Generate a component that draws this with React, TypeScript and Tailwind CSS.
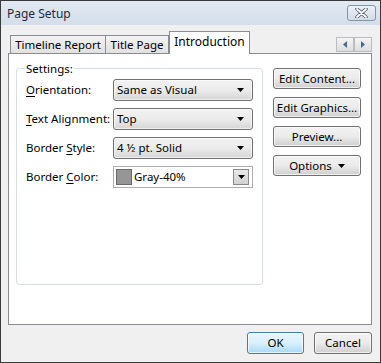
import type { ReactNode } from "react";

const font = { fontFamily: '"Noto Sans", "Open Sans", Arial, sans-serif' };

function Arrow({ className = "" }: { className?: string }) {
  return (
    <svg className={className} width="7" height="4" viewBox="0 0 7 4">
      <path d="M0 0H7L3.5 4Z" fill="#000" />
    </svg>
  );
}

function Key({ children }: { children: ReactNode }) {
  return <span className="underline underline-offset-[2px]">{children}</span>;
}

function Dropdown({ value }: { value: string }) {
  return (
    <div className="flex h-[22px] w-[140px] items-center justify-between rounded-[3px] border border-[#707070] bg-linear-to-b from-[#f2f2f2] via-[#ebebeb] to-[#d6d6d6] pl-[3px] pr-[8px] shadow-[inset_0_0_0_1px_rgba(255,255,255,0.6)]">
      <span className="leading-none">{value}</span>
      <Arrow />
    </div>
  );
}

function Row({ label, children }: { label: ReactNode; children: ReactNode }) {
  return (
    <div className="flex items-center">
      <div className="w-[87px] shrink-0 whitespace-nowrap">{label}</div>
      {children}
    </div>
  );
}

function WinButton({ children, primary = false, className = "" }: { children: ReactNode; primary?: boolean; className?: string }) {
  return (
    <button
      type="button"
      className={
        "flex items-center justify-center rounded-[3px] border leading-none shadow-[inset_0_0_0_1px_rgba(255,255,255,0.7)] " +
        (primary
          ? "border-[#3c7fb1] bg-linear-to-b from-[#eaf6fd] via-[#d9f0fc] to-[#a7d9f5] "
          : "border-[#707070] bg-linear-to-b from-[#f2f2f2] via-[#ebebeb] to-[#cfcfcf] ") +
        className
      }
    >
      {children}
    </button>
  );
}

function Tab({ label, active = false, className = "" }: { label: string; active?: boolean; className?: string }) {
  return (
    <div
      className={
        "flex items-center justify-center border-x border-t border-[#898c95] " +
        (active
          ? "relative z-10 -mb-[1px] h-[23px] bg-white pb-[3px] "
          : "h-[18px] bg-linear-to-b from-[#f3f3f3] to-[#e1e1e1] ") +
        className
      }
    >
      {label}
    </div>
  );
}

export default function App() {
  return (
    <div
      style={font}
      className="flex h-[363px] w-[381px] flex-col border border-[#3a3a3a] bg-[#f0f0f0] text-[11.5px] text-black"
    >
      {/* title bar */}
      <div className="flex h-[24px] items-start justify-between bg-linear-to-b from-[#e2e9f2] to-[#d3deea] pl-[6px] pr-[4px]">
        <span className="mt-[4px] text-[12px] text-[#1e2a3a]">Page Setup</span>
        <div className="mt-[4px] flex h-[16px] w-[29px] items-center justify-center rounded-[3px] border border-[#8494a8] bg-linear-to-b from-[#eef2f7] to-[#d3dbe6]">
          <svg width="13" height="10" viewBox="0 0 13 10">
            <path d="M2 1L11 9M11 1L2 9" stroke="#59657a" strokeWidth="3.6" strokeLinecap="round" />
            <path d="M2 1L11 9M11 1L2 9" stroke="#fff" strokeWidth="1.8" strokeLinecap="round" />
          </svg>
        </div>
      </div>

      {/* tab strip */}
      <div className="mx-[7px] mr-[8px] mt-[1px] flex h-[27px] items-end pl-[2px]">
        <Tab label="Timeline Report" className="w-[96px]" />
        <Tab label="Title Page" className="w-[63px] border-l-0" />
        <Tab label="Introduction" active className="w-[81px] text-[12px]" />
        <div className="mb-[1px] ml-auto flex">
          {["M4 0V7L0 3.5Z", "M0 0V7L4 3.5Z"].map((d) => (
            <div
              key={d}
              className="flex h-[15px] w-[18px] items-center justify-center border border-[#b9bcc2] bg-linear-to-b from-[#f4f4f4] to-[#dedede]"
            >
              <svg width="4" height="7" viewBox="0 0 4 7">
                <path d={d} fill="#4a6a96" />
              </svg>
            </div>
          ))}
        </div>
      </div>

      {/* panel */}
      <div className="ml-[7px] mr-[8px] flex h-[272px] items-start gap-[10px] border border-[#898c95] bg-white pl-[7px] pt-[14px]">
        <div className="flex h-[217px] w-[247px] flex-col rounded-[3px] border border-[#d5dfe5] pl-[9px]">
          <span className="-ml-[1px] -mt-[8px] h-[15px] self-start bg-white px-[1px] leading-[15px]">Settings:</span>
          <div className="mt-[3px] flex flex-col gap-[7px]">
            <Row label={<><Key>O</Key>rientation:</>}>
              <Dropdown value="Same as Visual" />
            </Row>
            <Row label={<><Key>T</Key>ext Alignment:</>}>
              <Dropdown value="Top" />
            </Row>
            <Row label={<>Border <Key>S</Key>tyle:</>}>
              <Dropdown value="4 ½ pt. Solid" />
            </Row>
            <Row label={<>Border <Key>C</Key>olor:</>}>
              <div className="flex h-[22px] w-[140px] items-center border border-[#abadb3] bg-white pl-[2px] pr-[3px]">
                <div className="h-[16px] w-[16px] border border-[#6a6a6a] bg-[#969696]" />
                <span className="ml-[2px] leading-none">Gray-40%</span>
                <div className="ml-auto flex h-[16px] w-[16px] items-center justify-center border border-[#8a8a8a] bg-linear-to-b from-[#eaeaea] to-[#d2d2d2]">
                  <Arrow />
                </div>
              </div>
            </Row>
          </div>
        </div>

        <div className="flex flex-col gap-[8px]">
          <WinButton className="h-[21px] w-[88px]">Edit Content...</WinButton>
          <WinButton className="h-[21px] w-[88px]">Edit Graphics...</WinButton>
          <WinButton className="h-[21px] w-[88px]">Preview...</WinButton>
          <WinButton className="h-[21px] w-[88px] gap-[6px]">
            Options <Arrow />
          </WinButton>
        </div>
      </div>

      {/* footer */}
      <div className="flex justify-end gap-[10px] pr-[8px] pt-[7px]">
        <WinButton primary className="h-[22px] w-[57px]">OK</WinButton>
        <WinButton className="h-[22px] w-[58px]">Cancel</WinButton>
      </div>
    </div>
  );
}
